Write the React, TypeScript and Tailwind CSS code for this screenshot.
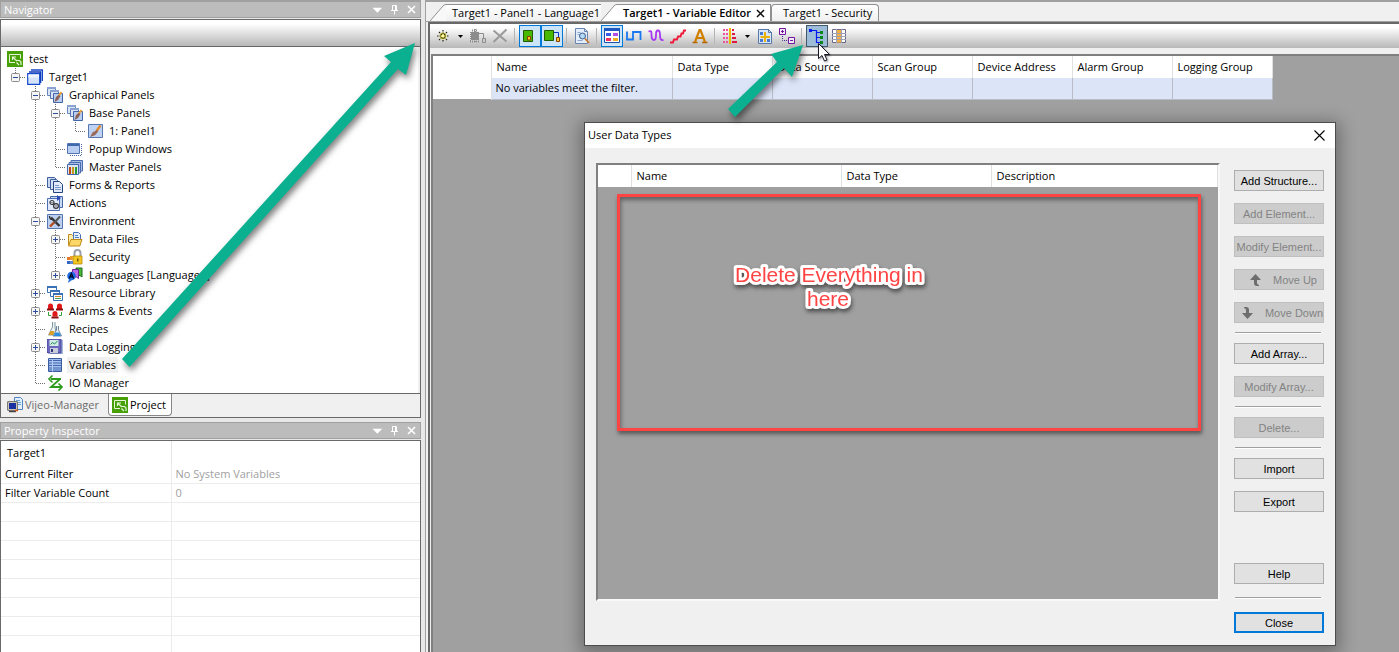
import { ReactNode } from "react";

const ui = "font-['Open_Sans','Noto_Sans',sans-serif]";

function Icon({ children, className = "h-4 w-4" }: { children: ReactNode; className?: string }) {
    return (
        <svg viewBox="0 0 16 16" className={`${className} shrink-0`} fill="none" aria-hidden="true">
            {children}
        </svg>
    );
}

function Brush() {
    return (
        <>
            <path d="M13.500 2.500 9.500 8" stroke="#e08a2c" strokeWidth="2.400" />
            <path d="M9.800 7 5.500 9.500 3 14l5-1.800 3.200-3.700z" fill="#9a6a5a" />
        </>
    );
}

function StackedPanels() {
    return (
        <>
            <path d="M.5.5h8v8h-8z" fill="#dbe5f6" stroke="#6684bd" />
            <path d="M0 0h9v2H0z" fill="#88a2d2" />
            <path d="M3.500 3.500h8v8h-8z" fill="#dbe5f6" stroke="#5674b0" />
            <path d="M3 3h9v2H3z" fill="#88a2d2" />
            <path d="M6.500 6.500h9v9h-9z" fill="#b8cdf0" stroke="#4366a8" />
            <path d="M14.500 5 11.500 9" stroke="#f0a030" strokeWidth="2" />
            <path d="m11.500 8-2.500 2-1.500 5 3.500-2 2.500-4z" fill="#8c6257" />
        </>
    );
}

const icons: Record<string, ReactNode> = {
    app: (
        <>
            <path d="M0 0h16v16H0z" fill="#48a008" />
            <path d="M8 11.500H2.500v-8h11v4" stroke="#e5f5d5" />
            <path d="m6 6.500 4 3.500M5.500 9V6H9" stroke="#e5f5d5" strokeWidth="1.200" />
            <path d="M9.500 9.500h3l1.500 1.500v3M9.500 11.500l2.500 2.500" stroke="#e5f5d5" strokeWidth="1.200" />
        </>
    ),
    target: (
        <>
            <path d="M4 1h11.500v11" stroke="#1646c8" strokeWidth="1.600" />
            <path d="M2 3h11.500v11" stroke="#0b38b8" strokeWidth="1.600" />
            <path d="M.7 4.700h12v10.600h-12z" fill="#d4e3fa" stroke="#1748cc" strokeWidth="1.200" />
            <path d="M1.500 5.500h10.500v3H1.500z" fill="#eef4fe" />
        </>
    ),
    panels: <StackedPanels />,
    panel: (
        <>
            <path d="M1.500 1.500h14v13h-14z" fill="#bed3f4" stroke="#5877b0" />
            <Brush />
        </>
    ),
    popup: (
        <>
            <path d="M.5 2.500h12v10H.5z" fill="#b9cdf0" stroke="#5575b4" />
            <path d="M1 3h11v2H1z" fill="#3f67ae" />
            <path d="M14.500 3v11M3 14.500h12" stroke="#4668a8" strokeDasharray="1 1" />
        </>
    ),
    master: (
        <>
            <path d="M4 1.500h11.500V12h-2V3.500H4z" fill="#a8bee6" stroke="#4a6cae" />
            <path d="M2 3.500h11.500V14h-2V5.500H2z" fill="#a8bee6" stroke="#4a6cae" />
            <path d="M.5 5.500h11v10H.5z" fill="#d8e4f8" stroke="#4567a8" />
            <path d="M2 8h2v7H2z" fill="#c24a12" />
            <path d="M5 8h2v7H5z" fill="#c79820" />
            <path d="M8 8h2v7H8z" fill="#2a9a30" />
        </>
    ),
    forms: (
        <>
            <path d="M.5.5h7l2 2v8h-9z" fill="#c8d8f2" stroke="#3f5f9c" />
            <path d="M3.500 2.500h6l2 2v8h-8z" fill="#d5e2f6" stroke="#3f5f9c" />
            <path d="M6.500 4.500h6l3 3v8h-9z" fill="#e2ebfa" stroke="#27437c" />
            <path d="M8 8.500h4M8 10.500h6M8 12.500h6" stroke="#7894c8" />
        </>
    ),
    actions: (
        <>
            <path d="M3.500 1.500h12v11h-12z" fill="#c8d8f2" stroke="#4567a8" />
            <path d="M.5 3.500h12v12H.5z" fill="#dfe9fa" stroke="#4d6eb0" />
            <path d="M10 0v6l4-3z" fill="#2848b8" />
            <circle cx="5" cy="7.500" r="2" stroke="#333" strokeWidth="1.200" />
            <circle cx="9" cy="11" r="2.400" stroke="#333" strokeWidth="1.200" />
            <circle cx="5" cy="7.500" r=".6" fill="#333" />
            <circle cx="9" cy="11" r=".7" fill="#333" />
        </>
    ),
    environment: (
        <>
            <path d="M.5 1.500h15v14H.5z" fill="#bcd0f1" stroke="#5877b0" />
            <path d="m4 4.500 8.500 8.500" stroke="#333" strokeWidth="2.400" />
            <path d="m13 3.500-6 6.500" stroke="#555" strokeWidth="2" />
            <path d="m7 9.500-4 4" stroke="#b84a1c" strokeWidth="2.400" />
            <path d="M2.500 3c0 3 1.500 4 3.500 3" stroke="#333" strokeWidth="1.400" />
        </>
    ),
    files: (
        <>
            <path d="M1.500 14V3.500h3l1 1H13V12" fill="#fff0b0" stroke="#c08a18" />
            <path d="M6.500 1.500h5l2 2V9h-7z" fill="#e5effc" stroke="#4a72b4" />
            <path d="M8 4.500h3M8 6.500h4" stroke="#4a82c4" />
            <path d="m1.500 15 2.400-6.500H15L12.800 15z" fill="#fbd768" stroke="#c08a18" />
        </>
    ),
    security: (
        <>
            <path d="M7.500 8V4a3 3 0 0 1 6 0v4" stroke="#9aa0a8" strokeWidth="2" />
            <path d="M6 7h9v8H6z" fill="#f2c620" stroke="#b88c10" strokeWidth=".8" />
            <path d="M10 9.500h1.500v3H10z" fill="#7a5c08" />
            <path d="M0 8h3v3H0z" fill="#e5792a" />
            <path d="M3 7h3v4H3z" fill="#e8a030" />
            <path d="M0 12h3v3H0z" fill="#3565c0" />
            <path d="M3 12h3v3H3z" fill="#6088d0" />
        </>
    ),
    languages: (
        <>
            <path d="M9 1h6v9l-2-1.500H9z" fill="#48b838" stroke="#1d6c1a" />
            <path d="M5.500 2.500h6v9l-2-1.500h-4z" fill="#b868e8" stroke="#6a2896" />
            <circle cx="4.500" cy="9" r="4.300" fill="#1c6ce0" />
            <path d="m1 16 1-4h4z" fill="#1c6ce0" />
            <path d="m2.200 11.500 2.200-5 2.200 5M3 9.800h3" stroke="#000c30" strokeWidth="1.400" />
        </>
    ),
    resources: (
        <>
            <path d="M.5 1.500h9v6h-9z" fill="#fff" stroke="#3970b8" />
            <path d="M0 1h10v2H0z" fill="#3970b8" />
            <path d="M3.500 5.500h9v6h-9z" fill="#fff" stroke="#3970b8" />
            <path d="M3 5h10v2H3z" fill="#3970b8" />
            <path d="M6.500 8.500h9v7h-9z" fill="#fff" stroke="#3970b8" />
            <path d="M6 8h10v2H6z" fill="#3970b8" />
            <path d="M8 11.500h6" stroke="#d88420" />
            <path d="M8 13.500h6" stroke="#48a048" />
        </>
    ),
    alarms: (
        <>
            <path d="M1 6V3a2.500 2.500 0 0 1 5 0v3zM10 6V3a2.500 2.500 0 0 1 5 0v3zM5.500 13.500V10.500a2.500 2.500 0 0 1 5 0v3z" fill="#e01818" />
            <path d="M0 6.500h7M9 6.500h7M4.500 14.500h7" stroke="#8c1010" strokeWidth="2" />
            <path d="M1.500 9v3.500H4M14.500 9v3.500H12" stroke="#38a038" />
        </>
    ),
    recipes: (
        <>
            <path d="M5.500 1v5L1.500 14h8L8 6V1" fill="#eef4f6" stroke="#8098a0" />
            <path d="m3.500 10-2 4h5l1-4z" fill="#d8a028" />
            <path d="M9.500 5v4L6 15h8.500L11.500 9V5" fill="#e8f0f4" stroke="#70889a" />
            <path d="m8.500 11.500-2 3.500H14l-2-3.500z" fill="#2b8ce0" />
        </>
    ),
    logging: (
        <>
            <path d="M3 1h13v14H3z" fill="#a6b8dc" />
            <path d="M0 0h14v14H1l-1-1z" fill="#6c68c0" stroke="#48449c" />
            <path d="M2.500 1h9v6h-9z" fill="#d0ece0" />
            <path d="m3.500 5.500 2-2 2 1.500 3-3" stroke="#208060" />
            <path d="M3 9h8v5H3z" fill="#c8ccd8" />
            <path d="M4 10h2v3H4z" fill="#34347c" />
        </>
    ),
    variables: (
        <>
            <path d="M1.500 1.500h13v13h-13z" fill="#a4c0f0" stroke="#3c5ca0" />
            <path d="M2 3.500h12M2 6h12M2 8.500h12M2 11h12M2 13h12" stroke="#4468b0" />
            <path d="M5.500 3v11.500" stroke="#b4ccf4" />
        </>
    ),
    io: (
        <>
            <path d="M14 4H4M13 4 4 12h11" stroke="#2f9c20" strokeWidth="1.800" />
            <path d="M5.500.5 2 4l3.500 3.500M11.500 8.500 15 12l-3.500 3.500" stroke="#2f9c20" strokeWidth="1.600" />
        </>
    ),
    manager: (
        <>
            <path d="M7.500.5h6l2 2v10h-8z" fill="#e2effc" stroke="#5084c0" />
            <path d="M9 3.500h4M9 5.500h5M9 7.500h5" stroke="#68a0d8" />
            <path d="M.7 4.700h9.600v8.600H.7z" fill="#e6e0cc" stroke="#60605c" />
            <path d="M2 6h7v6H2z" fill="#1830a0" />
            <path d="M2 14.500h7" stroke="#444" strokeWidth="1.500" />
            <path d="M8 13.500h3" stroke="#d85820" strokeWidth="1.500" />
        </>
    ),
    // toolbar
    newVar: (
        <>
            <circle cx="8" cy="8" r="3.500" fill="#f0e860" />
            <path d="M8 2v12M2 8h12M4 4l8 8M12 4l-8 8" stroke="#222210" strokeDasharray="1.500 1" strokeWidth="1.200" />
            <path d="M7 7h2v2H7z" fill="#fff8a0" />
        </>
    ),
    newSub: (
        <>
            <path d="M1 4h8v8H1z" fill="#8c8c8c" />
            <path d="M2 2.500h6M0 13.500h9M5 1v13M0 4v9" stroke="#8c8c8c" strokeDasharray="1 1" strokeWidth="2" />
            <path d="M9 5.500h4.500V10" stroke="#8c8c8c" />
            <path d="M12.500 10.500h3v4h-3z" fill="#ccc" stroke="#8c8c8c" />
        </>
    ),
    remove: <path d="m1.500 2.500 13 11M14.500 1.500 1.500 14" stroke="#9a9a9a" strokeWidth="2" />,
    internal: (
        <>
            <path d="M1.500 2.500h9v11h-9z" fill="#48b800" stroke="#205c00" />
            <path d="M5.500 8.500h3v3.500h-3z" fill="#ffc828" stroke="#8c3c00" />
        </>
    ),
    external: (
        <>
            <path d="M.5 2.500h9v10h-9z" fill="#48b800" stroke="#205c00" />
            <path d="M10 4.500h4.500V10" stroke="#0838c0" />
            <path d="M12.500 9.500h3v4h-3z" fill="#ffc828" stroke="#8c3c00" />
        </>
    ),
    find: (
        <>
            <path d="M1.500.5h9l3 3v12h-12z" fill="#e4eefb" stroke="#6c84b0" />
            <path d="M10.500.5v3h3" stroke="#6c84b0" />
            <path d="M3.500 4.500h3M3.500 6.500h2M3.500 12.500h5" stroke="#8ca4cc" />
            <circle cx="8.500" cy="8" r="3" fill="#b5d8f4" stroke="#3c5c90" />
            <path d="m11 10.500 4 4.500" stroke="#c87830" strokeWidth="1.800" />
        </>
    ),
    grid: (
        <>
            <path d="M.5 1.500h15v13H.5z" fill="#fff" stroke="#1c50a8" />
            <path d="M0 0h16v3H0z" fill="#2058c0" />
            <path d="M2 5h5v3H2z" fill="#3858e8" />
            <path d="M9 5h5v3H9z" fill="#b050e0" />
            <path d="M2 10h5v3H2z" fill="#f03060" />
            <path d="M9 10h5v3H9z" fill="#f0b020" />
        </>
    ),
    pulse: <path d="M1 3.500v8h6V4h7.500v8" stroke="#1878f0" strokeWidth="1.800" />,
    wave: (
        <path
            d="M.5 3.500c3-1 3 0 3 3.500s1 5 2.500 5 2-1.500 2-5 .5-4.500 2-4.500 2 1 2 4.500.5 5.500 3.500 5"
            stroke="#a838f0"
            strokeWidth="1.800"
        />
    ),
    steps: <path d="M0 14.500h3l1-3h3l1-3h2.500l1-3h1.500l1-3h2" stroke="#f01838" strokeWidth="1.900" />,
    letter: (
        <>
            <path d="m3 14 4.500-12h1L13 14M5 10h6.500" stroke="#d08000" strokeWidth="2.200" />
            <path d="M.5 14.500h5M10 14.500h5.500" stroke="#b06800" strokeWidth="1.500" />
        </>
    ),
    filter: (
        <>
            <path d="M1 2h5M1 6h5M1 10h5M1 14h5" stroke="#f050a0" strokeDasharray="2 1" strokeWidth="2" />
            <path d="M8 0v16" stroke="#f0b800" strokeWidth="2" />
            <path d="M10 2h2M10 6h3M10 10h4M10 14h5" stroke="#e01840" strokeWidth="2" />
        </>
    ),
    report: (
        <>
            <path d="M1.500 1.500h10l3 3v11h-13z" fill="#d8e6fa" stroke="#5878a8" />
            <path d="M11.500 1v3.500H15" stroke="#5878a8" />
            <path d="M3 4h3v3H3zM3 11h3v3H3zM10 11h3v3h-3z" fill="#4878d0" />
            <path d="M8 4v10M3.500 9H13" stroke="#e8b010" strokeWidth="2" />
        </>
    ),
    expand: (
        <>
            <path d="M.5.5h6v6h-6zM9.500 9.500h6v6h-6z" fill="#f4eafc" stroke="#7018a0" />
            <path d="M2 3.500h3M3.500 2v3M11 12.500h3" stroke="#7018a0" />
            <path d="M3.500 8v4.500H9" stroke="#4020a0" strokeDasharray="1 1" />
        </>
    ),
    dataTypes: (
        <>
            <path d="M3 2.500h4.500v12H11M7.500 4.500H11M7.500 9.500H11" stroke="#0818f0" strokeWidth="1.200" />
            <path d="M0 1h3v3H0z" fill="#0818f0" />
            <path d="M11 3h3v3h-3zM11 8h3v3h-3zM11 13h3v3h-3z" fill="#088818" />
        </>
    ),
    columns: (
        <>
            <path d="M1.500 1.500h13v13h-13z" fill="#fff" stroke="#686888" />
            <path d="M5.500 2h5v12.500h-5z" fill="#f8b040" />
            <path d="M1 5.500h14M1 8.500h14M1 11.500h14M5.500 1v14M10.500 1v14" stroke="#a0a0b4" />
        </>
    ),
};

type TreeNode = { label: string; icon: string; guides: string[]; selected?: boolean };

// guides, one per level: "" blank, "|" pass through, "t" branch, "e" last branch
const tree: TreeNode[] = [
    { label: "test", icon: "app", guides: [] },
    { label: "Target1", icon: "target", guides: ["e-"] },
    { label: "Graphical Panels", icon: "panels", guides: ["", "t-"] },
    { label: "Base Panels", icon: "panels", guides: ["", "|", "t-"] },
    { label: "1: Panel1", icon: "panel", guides: ["", "|", "|", "e"] },
    { label: "Popup Windows", icon: "popup", guides: ["", "|", "t"] },
    { label: "Master Panels", icon: "master", guides: ["", "|", "e"] },
    { label: "Forms & Reports", icon: "forms", guides: ["", "t"] },
    { label: "Actions", icon: "actions", guides: ["", "t"] },
    { label: "Environment", icon: "environment", guides: ["", "t-"] },
    { label: "Data Files", icon: "files", guides: ["", "|", "t+"] },
    { label: "Security", icon: "security", guides: ["", "|", "t"] },
    { label: "Languages [Language1]", icon: "languages", guides: ["", "|", "e+"] },
    { label: "Resource Library", icon: "resources", guides: ["", "t+"] },
    { label: "Alarms & Events", icon: "alarms", guides: ["", "t+"] },
    { label: "Recipes", icon: "recipes", guides: ["", "t"] },
    { label: "Data Logging", icon: "logging", guides: ["", "t+"] },
    { label: "Variables", icon: "variables", guides: ["", "t"], selected: true },
    { label: "IO Manager", icon: "io", guides: ["", "e"] },
];

function Guide({ kind }: { kind: string }) {
    const branch = kind[0];
    const box = kind[1];
    return (
        <svg viewBox="0 0 20 18" className="h-[18px] w-5 shrink-0" fill="none" aria-hidden="true">
            <g stroke="#707070" strokeDasharray="1 1">
                {branch && <path d={branch === "e" ? "M10.500 0v10" : "M10.500 0v18"} />}
                {branch && branch !== "|" && <path d="M11 9.500h9" />}
            </g>
            {box && (
                <>
                    <rect x="6.500" y="5.500" width="8" height="8" rx="1" fill="#f6f6f6" stroke="#8c8c8c" />
                    <path d={box === "+" ? "M8 9.500h5M10.500 7v5" : "M8 9.500h5"} stroke="#2c4c9c" />
                </>
            )}
        </svg>
    );
}

function PaneTitle({ title }: { title: string }) {
    return (
        <div className="flex h-[17px] shrink-0 items-center border border-[#a0a0a0] bg-[#bcbcbc] pl-[3px] text-white">
            <h2 className="flex-1">{title}</h2>
            <button aria-label={`${title} menu`} className="flex w-[18px] justify-center">
                <Icon className="h-3 w-3">
                    <path d="M2 5h13l-6.500 6.500z" fill="#fff" />
                </Icon>
            </button>
            <button aria-label={`Pin ${title}`} className="flex w-4 justify-center">
                <svg viewBox="0 0 9 11" className="h-[11px] w-[9px]" fill="none" aria-hidden="true">
                    <path d="M2.500 6V1.500h4V6M5.500 1v5M1 6.500h7M4.500 7v3.500" stroke="#fff" />
                </svg>
            </button>
            <button aria-label={`Close ${title}`} className="flex w-[18px] justify-center">
                <svg viewBox="0 0 9 9" className="h-[9px] w-[9px]" aria-hidden="true">
                    <path d="m1 1 7 7M8 1 1 8" stroke="#fff" strokeWidth="1.600" />
                </svg>
            </button>
        </div>
    );
}

function Navigator() {
    return (
        <section className="flex flex-col">
            <PaneTitle title="Navigator" />
            <div className="mt-px border border-[#696969] bg-[#f0f0f0]">
                <div className="h-[26px] bg-linear-to-b from-white from-15% to-[#b8b8b8]" />
                <div className="border-y border-[#696969] pr-[2px]">
                    <ul role="tree" className="bg-white pt-[3px] pb-px pl-1">
                        {tree.map((node) => (
                            <li key={node.label} role="treeitem" className="flex h-[18px] items-center">
                                {node.guides.map((kind, i) => (
                                    <Guide key={i} kind={kind} />
                                ))}
                                <span className="flex w-5 shrink-0 justify-center">
                                    <Icon>{icons[node.icon]}</Icon>
                                </span>
                                <span
                                    className={`ml-[2px] px-[2px] leading-4 whitespace-nowrap ${node.selected ? "bg-[#f0f0f0]" : ""}`}
                                >
                                    {node.label}
                                </span>
                            </li>
                        ))}
                    </ul>
                </div>
                <div className="flex h-[23px] items-start pl-[6px]">
                    <button className="flex h-[22px] w-[101px] items-center gap-[2px] text-[#6d6d6d]">
                        <Icon>{icons.manager}</Icon>
                        Vijeo-Manager
                    </button>
                    <button className="flex h-[22px] w-16 items-center gap-[2px] rounded-b border border-t-0 border-[#888] bg-white pl-[3px]">
                        <Icon>{icons.app}</Icon>
                        Project
                    </button>
                </div>
            </div>
        </section>
    );
}

const properties = [
    ["Current Filter", "No System Variables"],
    ["Filter Variable Count", "0"],
    ...Array.from({ length: 8 }, () => ["", ""]),
];

function PropertyInspector() {
    return (
        <section className="flex min-h-0 flex-1 flex-col overflow-hidden">
            <PaneTitle title="Property Inspector" />
            <div className="mt-px flex-1 overflow-hidden border border-b-0 border-[#696969] bg-white">
                <table className="w-full table-fixed border-collapse text-left">
                    <colgroup>
                        <col className="w-[170px]" />
                        <col />
                    </colgroup>
                    <thead>
                        <tr className="h-[23px]">
                            <th className="border-r border-[#e4e4e4] p-0 pl-[6px] font-normal">Target1</th>
                            <th />
                        </tr>
                    </thead>
                    <tbody>
                        {properties.map(([name, value], i) => (
                            <tr key={i} className="h-[19px] border-b border-[#ececec] leading-4">
                                <td className="border-r border-[#ececec] p-0 pt-px pl-1">{name}</td>
                                <td className="p-0 pt-px pl-1 text-[#a0a0a0]">{value}</td>
                            </tr>
                        ))}
                    </tbody>
                </table>
            </div>
        </section>
    );
}

function EditorTabs() {
    return (
        <div role="tablist" className="flex h-5 shrink-0 items-end border-b border-[#a0a0a0] pt-px pl-1">
            <button role="tab" className="flex h-[17px] items-center">
                <svg viewBox="0 0 16 17" className="h-[17px] w-4" aria-hidden="true">
                    <path d="M0 17 13 2q1-1.500 3-1.500V17z" fill="#f8f8f8" />
                    <path d="M0 17 13 2q1-1.500 3-1.500" fill="none" stroke="#909090" />
                </svg>
                <span className="flex h-[17px] w-[155px] items-center border-t border-[#909090] bg-linear-to-b from-white to-[#f0f0f0] pl-[6px] whitespace-nowrap">
                    Target1 - Panel1 - Language1
                </span>
            </button>
            <button role="tab" aria-selected="true" className="flex h-[17px] items-center font-semibold">
                <svg viewBox="0 0 16 17" className="h-[17px] w-4" aria-hidden="true">
                    <path d="M0 17 13 2q1-1.500 3-1.500V17z" fill="#fff" />
                    <path d="M0 17 13 2q1-1.500 3-1.500" fill="none" stroke="#909090" />
                </svg>
                <span className="flex h-[17px] w-[154px] items-center justify-between border-t border-r border-[#909090] bg-white pr-[5px] pl-[6px] whitespace-nowrap">
                    Target1 - Variable Editor
                    <svg viewBox="0 0 9 9" className="h-[9px] w-[9px]" aria-hidden="true">
                        <path d="m1 1 7 7M8 1 1 8" stroke="#111" strokeWidth="1.500" />
                    </svg>
                </span>
            </button>
            <button
                role="tab"
                className="flex h-[17px] w-[108px] items-center rounded-t border border-b-0 border-[#909090] bg-linear-to-b from-white to-[#f0f0f0] pl-[11px] whitespace-nowrap"
            >
                Target1 - Security
            </button>
        </div>
    );
}

const tools = [
    { icon: "newVar", label: "New Variable" },
    { icon: "caret", label: "New Variable options" },
    { icon: "newSub", label: "New Child Variable" },
    { icon: "remove", label: "Delete" },
    { icon: "sep1" },
    { icon: "internal", label: "Show Internal", state: "on" },
    { icon: "external", label: "Show External", state: "on" },
    { icon: "sep2" },
    { icon: "find", label: "Find" },
    { icon: "sep3" },
    { icon: "grid", label: "All Types", state: "on" },
    { icon: "pulse", label: "Discrete" },
    { icon: "wave", label: "Float" },
    { icon: "steps", label: "Integer" },
    { icon: "letter", label: "String" },
    { icon: "sep4" },
    { icon: "filter", label: "Filter" },
    { icon: "caret", label: "Filter options" },
    { icon: "report", label: "Cross Reference" },
    { icon: "expand", label: "Expand" },
    { icon: "sep5" },
    { icon: "dataTypes", label: "User Data Types", state: "pressed" },
    { icon: "columns", label: "Columns" },
];

const toolStates: Record<string, string> = {
    on: "border border-[#0078d7] bg-[#cce4f7]",
    pressed: "border border-[#44586c] bg-[#9cbcd8]",
};

function Toolbar() {
    return (
        <div className="flex h-6 shrink-0 items-center bg-linear-to-b from-white from-15% to-[#b8b8b8] pl-[2px]">
            {tools.map(({ icon, label, state }) => {
                if (!label) return <span key={icon} className="mr-1 ml-[3px] h-4 w-px bg-[#b4b4b4]" />;
                if (icon === "caret") {
                    return (
                        <button key={label} aria-label={label} className="flex w-[13px] justify-center">
                            <svg viewBox="0 0 5 3" className="h-[3px] w-[5px]" aria-hidden="true">
                                <path d="M0 0h5L2.500 3z" fill="#000" />
                            </svg>
                        </button>
                    );
                }
                return (
                    <button
                        key={label}
                        aria-label={label}
                        className={`flex h-[22px] w-[22px] items-center justify-center ${state ? toolStates[state] : ""}`}
                    >
                        <Icon>{icons[icon]}</Icon>
                    </button>
                );
            })}
        </div>
    );
}

const variableColumns = ["Data Type", "Data Source", "Scan Group", "Device Address", "Alarm Group", "Logging Group"];

function VariableTable() {
    return (
        <table className="w-[839px] table-fixed border-collapse text-left">
            <colgroup>
                <col className="w-[58px]" />
                <col className="w-[181px]" />
                {variableColumns.map((name) => (
                    <col key={name} className="w-[100px]" />
                ))}
            </colgroup>
            <thead>
                <tr className="h-[22px] bg-white">
                    <th className="border-r border-[#e0e0e0]" />
                    {["Name", ...variableColumns].map((name) => (
                        <th key={name} className="border-r border-[#e0e0e0] p-0 pl-[5px] font-normal">
                            {name}
                        </th>
                    ))}
                </tr>
            </thead>
            <tbody>
                <tr className="h-[21px] bg-[#dce5f8]">
                    <td className="border-r border-[#e0e0e0] bg-white" />
                    <td className="border-r border-b border-[#b8bcc4] p-0 pl-1">No variables meet the filter.</td>
                    {variableColumns.map((name) => (
                        <td key={name} className="border-r border-b border-[#b8bcc4]" />
                    ))}
                </tr>
            </tbody>
        </table>
    );
}

function DialogButton({
    children,
    disabled,
    variant = "justify-center",
}: {
    children: ReactNode;
    disabled?: boolean;
    variant?: string;
}) {
    return (
        <button
            disabled={disabled}
            className={`flex h-[21px] w-full shrink-0 items-center overflow-hidden border border-[#adadad] bg-[#e1e1e1] whitespace-nowrap text-black outline-[#0078d7] disabled:border-[#bfbfbf] disabled:bg-[#cccccc] disabled:text-[#838383] ${variant}`}
        >
            {children}
        </button>
    );
}

function Rule() {
    return <hr className="my-[9px] mr-[3px] ml-px h-[2px] shrink-0 border-t border-b border-t-[#a0a0a0] border-b-white" />;
}

function MoveArrow({ down }: { down?: boolean }) {
    return (
        <svg viewBox="0 0 11 12" className="mr-3 h-3 w-[11px] shrink-0" aria-hidden="true">
            <path
                d={down ? "M2 0h2q3 0 3 3v3h4l-5.500 6L0 6h4V3Q4 1.500 2 1z" : "M5.500 0 11 6H7v3q0 1.500 2 2v1H7q-3 0-3-3V6H0z"}
                fill="#6d6d6d"
            />
        </svg>
    );
}

function UserDataTypes() {
    return (
        <div
            role="dialog"
            aria-label="User Data Types"
            className="absolute top-[122px] left-[584px] flex h-[524px] w-[752px] flex-col border border-[#4c4c4c] bg-[#f0f0f0] shadow-[0_4px_16px_4px_rgba(0,0,0,0.32)]"
        >
            <div className="flex h-[25px] shrink-0 items-center justify-between bg-white pr-[10px] pb-px pl-[3px]">
                <h2>User Data Types</h2>
                <button aria-label="Close window">
                    <svg viewBox="0 0 11 11" className="h-[11px] w-[11px]" aria-hidden="true">
                        <path d="m.5.5 10 10M10.500.5l-10 10" stroke="#000" strokeWidth="1.100" />
                    </svg>
                </button>
            </div>
            <div className="flex min-h-0 flex-1 px-[11px] pb-3">
                <div className="relative mt-[15px] mb-8 flex-1 border-2 border-t-[#808080] border-r-[#f8f8f8] border-b-[#f8f8f8] border-l-[#808080] bg-[#a0a0a0]">
                    <table className="w-full table-fixed border-collapse text-left">
                        <colgroup>
                            <col className="w-[33px]" />
                            <col className="w-[210px]" />
                            <col className="w-[150px]" />
                            <col />
                        </colgroup>
                        <thead>
                            <tr className="h-[22px] bg-white">
                                {["", "Name", "Data Type", "Description"].map((name) => (
                                    <th key={name} className="border-r border-[#e0e0e0] p-0 pl-[5px] font-normal">
                                        {name}
                                    </th>
                                ))}
                            </tr>
                        </thead>
                    </table>
                    <div className="absolute top-[29px] right-[17px] bottom-[168px] left-[19px] border-3 border-[#ff4444] shadow-[1px_3px_4px_rgba(0,0,0,0.45),inset_1px_3px_4px_rgba(0,0,0,0.4)]" />
                </div>
                <div className="ml-[14px] flex w-[90px] flex-col pt-[22px] font-['Liberation_Sans',sans-serif] text-[11px]">
                    <div className="flex flex-col gap-3">
                        <DialogButton>Add Structure...</DialogButton>
                        <DialogButton disabled>Add Element...</DialogButton>
                        <DialogButton disabled>Modify Element...</DialogButton>
                        <DialogButton disabled variant="justify-end pr-[6px]">
                            <MoveArrow />
                            Move Up
                        </DialogButton>
                        <DialogButton disabled variant="justify-end">
                            <MoveArrow down />
                            Move Down
                        </DialogButton>
                    </div>
                    <Rule />
                    <div className="flex flex-col gap-3">
                        <DialogButton>Add Array...</DialogButton>
                        <DialogButton disabled>Modify Array...</DialogButton>
                    </div>
                    <Rule />
                    <DialogButton disabled>Delete...</DialogButton>
                    <Rule />
                    <div className="flex flex-1 flex-col gap-3">
                        <DialogButton>Import</DialogButton>
                        <DialogButton>Export</DialogButton>
                    </div>
                    <DialogButton>Help</DialogButton>
                    <div className="py-1">
                        <Rule />
                    </div>
                    <DialogButton variant="justify-center outline-2 -outline-offset-2">Close</DialogButton>
                </div>
            </div>
        </div>
    );
}

function Annotations() {
    return (
        <svg className="pointer-events-none absolute inset-0 h-full w-full">
            <g fill="#0ab090" className="drop-shadow-[2px_4px_3px_rgba(0,0,0,0.5)]">
                <path d="M122 359 391 62l-7-6 31-13-9 32-8-6-268.500 298z" />
                <path d="m728 109 49-47-6-8 32-9-11 32-8-9-49 49z" />
            </g>
            <text
                textAnchor="middle"
                fill="#ff4444"
                stroke="#fff"
                strokeWidth="6"
                strokeLinejoin="round"
                className="font-['Liberation_Sans',sans-serif] text-[21px] [paint-order:stroke] drop-shadow-[1px_3px_2px_rgba(0,0,0,0.5)]"
            >
                <tspan x="829" y="282">
                    Delete Everything in
                </tspan>
                <tspan x="828" y="306">
                    here
                </tspan>
            </text>
            <path
                d="M818.500 43.500v15l3.500-3 2.500 5.500 2.500-1-2.500-5.500h5z"
                fill="#fff"
                stroke="#181828"
                className="drop-shadow-[1px_1px_1px_rgba(0,0,0,0.4)]"
            />
        </svg>
    );
}

export default function App() {
    return (
        <div className={`relative flex h-screen overflow-hidden bg-[#e8e8e8] text-[11px] leading-4 text-black ${ui}`}>
            <aside className="flex w-[421px] shrink-0 flex-col gap-1 border-t border-[#a0a0a0]">
                <Navigator />
                <PropertyInspector />
            </aside>
            <main className="ml-1 flex min-w-0 flex-1 flex-col border-t-2 border-l border-[#a0a0a0] bg-[#f0f0f0]">
                <EditorTabs />
                <div className="ml-[2px] flex min-h-0 flex-1 flex-col border-t-2 border-l-2 border-[#696969]">
                    <Toolbar />
                    <div className="mt-[6px] ml-px min-h-0 flex-1 border-t-2 border-l-2 border-[#808080] bg-[#a0a0a0]">
                        <VariableTable />
                    </div>
                </div>
            </main>
            <UserDataTypes />
            <Annotations />
        </div>
    );
}
